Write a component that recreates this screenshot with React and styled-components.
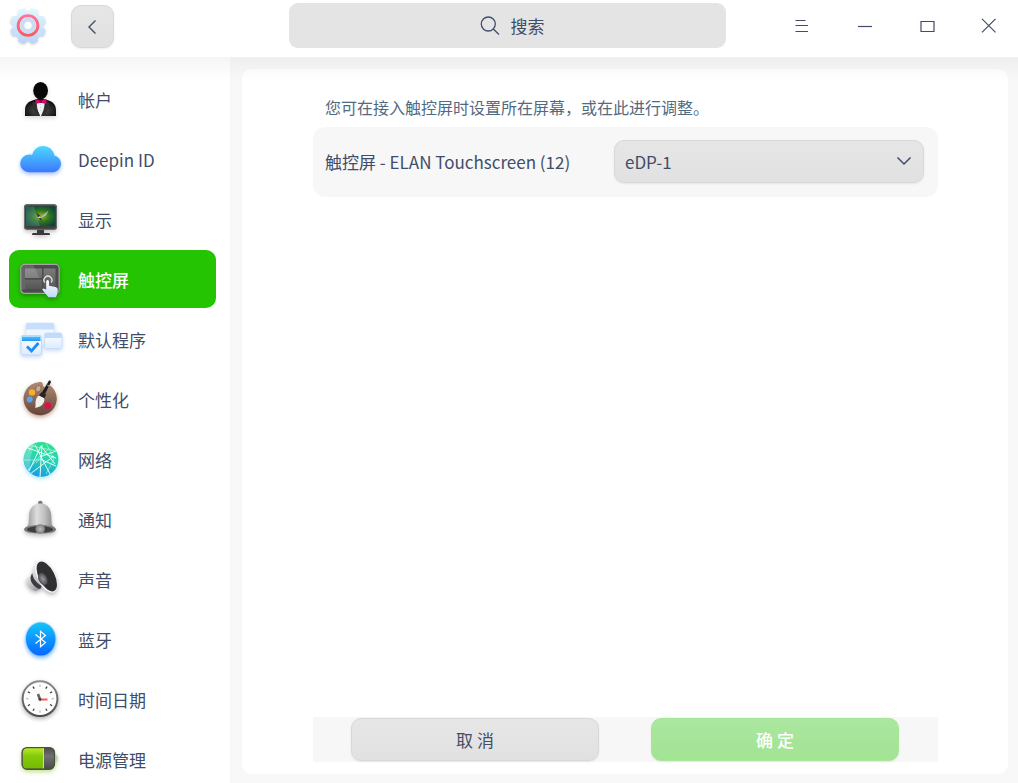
import { useState } from "react";
import styled, { createGlobalStyle } from "styled-components";

const GlobalStyle = createGlobalStyle`
  * {
    box-sizing: border-box;
  }
  body {
    margin: 0;
    background: #ffffff;
    color: #414d68;
    font-family: "Noto Sans CJK SC", "Noto Sans", sans-serif;
    font-size: 17px;
    line-height: 24px;
  }
  button, input, select {
    font: inherit;
    color: inherit;
  }
`;

const AccountIcon = () => (
  <Icon viewBox="0 0 44 44">
    <defs>
      <radialGradient id="suit" cx="50%" cy="70%" r="60%">
        <stop offset="0" stopColor="#5a5a5a" />
        <stop offset="1" stopColor="#0c0c0c" />
      </radialGradient>
    </defs>
    <path d="M7 39V33c0-6 4-9 9-10l6-2 7 2c5 1 9 4 9 10v6z" fill="url(#suit)" />
    <path d="M18.500 25h8.500l-1.500 8-2.500 6h-1L19.500 33z" fill="#f2f2f2" />
    <path d="M22.800 27v9" stroke="#c8c8c8" strokeDasharray="1 2" />
    <path d="M16 24l6 15h-3l-5-10 2-.6-2-1.400zM29.500 24L23.500 39h3l5-10-2-.6 2-1.400z" fill="#303030" />
    <ellipse cx="22.600" cy="13.600" rx="7.400" ry="8.600" fill="#080808" />
    <path d="M17.500 22l5 1.500 6-1.500v5l-6-1.300-5 1.300z" fill="#d5086b" />
    <path d="M21.500 23h2.500v3h-2.500z" fill="#8f0046" />
  </Icon>
);

const CloudIcon = () => (
  <Icon viewBox="0 0 44 44" $shadow="rgba(45, 110, 255, 0.45)">
    <defs>
      <linearGradient id="cloud" x1="0" y1="0" x2="0" y2="1">
        <stop offset="0" stopColor="#4cd9fb" />
        <stop offset="0.500" stopColor="#43a8fd" />
        <stop offset="1" stopColor="#3c78ff" />
      </linearGradient>
    </defs>
    <path
      d="M11 35.200a8.800 8.800 0 0 1 0-17.600c1 0 2 .1 3 .5a11.400 11.400 0 0 1 22.400.5A8.400 8.400 0 0 1 35 35.200z"
      fill="url(#cloud)"
    />
  </Icon>
);

const DisplayIcon = () => (
  <Icon viewBox="0 0 44 44" $shadow="rgba(0, 0, 0, 0.25)">
    <defs>
      <radialGradient id="screen" cx="52%" cy="50%" r="60%">
        <stop offset="0" stopColor="#94b81b" />
        <stop offset="0.500" stopColor="#2f7422" />
        <stop offset="1" stopColor="#0a4339" />
      </radialGradient>
    </defs>
    <path d="M19 32h7v4h5q1 0 1 2H14q0-2 1-2h4z" fill="#3a3a3a" />
    <rect x="6" y="7.300" width="33" height="25.500" rx="3" fill="#3f3f3f" />
    <rect x="6.500" y="7.800" width="32" height="24.500" rx="2.500" fill="none" stroke="#707070" />
    <rect x="8" y="9.500" width="29" height="19.500" rx="1" fill="url(#screen)" />
    <path d="M8 9.500h8l6 19.500H8z" fill="#7eb0b8" opacity="0.280" />
    <path d="M23 19.500l7.500-6-2.500 5-4.500 2.500z" fill="#a3bd9a" />
    <path d="M18 15.500l4.500 3.500 1.500 6-3.500-4.500z" fill="#312b57" />
    <path d="M19 21l3-2 1.500 2z" fill="#d1ec3d" />
  </Icon>
);

const TouchIcon = () => (
  <Icon viewBox="0 0 44 44" $shadow="rgba(0, 0, 0, 0.3)">
    <defs>
      <linearGradient id="pad" x1="0" y1="0" x2="0" y2="1">
        <stop offset="0" stopColor="#7c7c7c" />
        <stop offset="1" stopColor="#565656" />
      </linearGradient>
      <linearGradient id="hand" x1="0" y1="0" x2="0" y2="1">
        <stop offset="0" stopColor="#ffffff" />
        <stop offset="1" stopColor="#bfd9fa" />
      </linearGradient>
    </defs>
    <rect x="2.800" y="7.400" width="38.400" height="29" rx="4" fill="#4c4c4c" stroke="#a5a5a5" strokeWidth="1.200" />
    <path d="M7 11.500h17V21H7zM25.500 11.500H37.500V32H25.500zM7 22.800h17V32H7z" fill="url(#pad)" />
    <path d="M3.500 8.200h12L21.500 21H7V32l-3.500 1z" fill="#ffffff" opacity="0.150" />
    <path d="M26.700 25.500a4 4 0 1 1 6.500 0" fill="none" stroke="#e5e5e5" strokeWidth="1.300" />
    <path
      d="M28.200 24.500q0-1.500 1.400-1.500t1.400 1.500v4.200l6.500 1.200q2.500.5 2.300 3-.2 3.600-1.800 7.300h-7.500l-5.800-7q-1-1.500.5-1.800l3 1.100z"
      fill="url(#hand)"
    />
  </Icon>
);

const DefaultAppsIcon = () => (
  <Icon viewBox="0 0 46 44" $shadow="rgba(70, 140, 220, 0.3)" $wide>
    <defs>
      <linearGradient id="pane" x1="0" y1="0" x2="0" y2="1">
        <stop offset="0" stopColor="#ffffff" />
        <stop offset="1" stopColor="#dcebff" />
      </linearGradient>
      <linearGradient id="bar" x1="0" y1="0" x2="0" y2="1">
        <stop offset="0" stopColor="#4fc0ff" />
        <stop offset="1" stopColor="#2596f5" />
      </linearGradient>
    </defs>
    <rect x="7.800" y="6" width="28.400" height="22" rx="2" fill="url(#pane)" stroke="#d9e8fa" strokeWidth="0.600" />
    <path d="M7.800 12.500V8q0-2 2-2h24.400q2 0 2 2v4.500z" fill="#c5e0ff" />
    <rect x="26.500" y="16" width="17.500" height="15.500" rx="2" fill="url(#pane)" stroke="#c3daf5" strokeWidth="0.800" />
    <path d="M26.500 21v-3q0-2 2-2H42q2 0 2 2v3z" fill="#bfdcff" />
    <rect x="3" y="18.500" width="20.500" height="19.500" rx="2" fill="url(#pane)" stroke="#bcd5f2" strokeWidth="0.900" />
    <path d="M4 24v-4.500h18.500V24z" fill="url(#bar)" />
    <path d="M9 29.500l4.500 4.500 7-8" fill="none" stroke="#1b8ef5" strokeWidth="2.800" />
  </Icon>
);

const PaletteIcon = () => (
  <Icon viewBox="0 0 44 44" $shadow="rgba(130, 50, 20, 0.45)">
    <defs>
      <linearGradient id="wood" x1="0" y1="0" x2="0" y2="1">
        <stop offset="0" stopColor="#ad8b73" />
        <stop offset="1" stopColor="#65453a" />
      </linearGradient>
    </defs>
    <path
      d="M20.500 5.200c3-.3 4.200.2 4.300 2 .1 2.500 2 3.600 4.500 2.300 2-1 3-1 4.500.4A16.600 16.600 0 1 1 20.500 5.200z"
      fill="url(#wood)"
    />
    <ellipse cx="20.200" cy="11.600" rx="2.600" ry="3.300" fill="#c9aa99" stroke="#755548" strokeWidth="0.600" transform="rotate(20 20 12)" />
    <circle cx="14" cy="15.400" r="3.200" fill="#f7ae2c" />
    <circle cx="11.700" cy="22.500" r="3" fill="#58a5f3" />
    <circle cx="29.700" cy="28.600" r="3.300" fill="#e50d4b" />
    <path d="M31 3.500q1.800-.4 2 1.400L27 17l-3-1.500z" fill="#1d1d1d" />
    <path d="M23.800 15l4.400 2.500-2 4-5.400-3z" fill="#242424" />
    <path d="M29.300 8.200l1.700.9" stroke="#c6c6c6" />
    <path d="M20.800 18.500l5.400 2.800c1 5-3.200 9.200-9.200 9.400 1.300-2 0-3.600.6-6.500.5-2.500 1.500-4.500 3.200-5.700z" fill="#f2eee9" />
  </Icon>
);

const NetworkIcon = () => (
  <Icon viewBox="0 0 44 44" $shadow="rgba(20, 185, 235, 0.35)">
    <defs>
      <linearGradient id="globe" x1="0.600" y1="0" x2="0.400" y2="1">
        <stop offset="0" stopColor="#2be38d" />
        <stop offset="0.500" stopColor="#29d2b3" />
        <stop offset="1" stopColor="#159be6" />
      </linearGradient>
      <clipPath id="globeClip">
        <circle cx="23" cy="22.300" r="17.400" />
      </clipPath>
    </defs>
    <circle cx="23" cy="22.300" r="17.400" fill="url(#globe)" />
    <g clipPath="url(#globeClip)" fill="none" stroke="#e3fff6">
      <path d="M23 9L11 34M23 9l14 18M24 8l-2 32M17 8l15 29M22 20L38 14M22 22l16 7M36 19L12 37M10 11l28 10" />
      <path d="M14 9l24 5M6 23h16M28 6l8 16-8 15M31 11L18 26M10 33l12-14M15 6l-4 8" strokeWidth="0.700" opacity="0.700" />
    </g>
    <path d="M6 22A17 17 0 0 1 17 6q-6 14-5 30-6-5-6-14z" fill="#ffffff" opacity="0.250" />
  </Icon>
);

const BellIcon = () => (
  <Icon viewBox="0 0 44 44" $shadow="rgba(0, 0, 0, 0.25)">
    <defs>
      <linearGradient id="bell" x1="0" y1="0" x2="1" y2="0">
        <stop offset="0" stopColor="#858585" />
        <stop offset="0.400" stopColor="#dedede" />
        <stop offset="0.650" stopColor="#bebebe" />
        <stop offset="1" stopColor="#777777" />
      </linearGradient>
      <radialGradient id="clapper">
        <stop offset="0" stopColor="#bdbdbd" />
        <stop offset="1" stopColor="#7d7d7d" />
      </radialGradient>
    </defs>
    <circle cx="22.300" cy="6" r="2.300" fill="#777777" />
    <path d="M22.300 6.500c7.500 0 10.700 5.700 10.900 12l.4 8c.2 3 4.400 4 4.400 6 0 3-7 4.500-15.800 4.500S6 35.500 6 32.500c0-2 4.500-3 4.700-6l.4-8c.2-6.300 3.700-12 11.200-12z" fill="url(#bell)" />
    <ellipse cx="22" cy="32.300" rx="15.500" ry="4.200" fill="#777777" />
    <ellipse cx="22" cy="32.500" rx="13" ry="3.300" fill="#3d3d3d" />
    <circle cx="22.200" cy="32" r="4.800" fill="url(#clapper)" />
  </Icon>
);

const SoundIcon = () => (
  <Icon viewBox="0 0 44 44" $shadow="rgba(0, 0, 0, 0.3)">
    <defs>
      <linearGradient id="cone" x1="0" y1="0" x2="1" y2="1">
        <stop offset="0" stopColor="#f4f4f6" />
        <stop offset="1" stopColor="#85858a" />
      </linearGradient>
      <radialGradient id="core">
        <stop offset="0" stopColor="#9a9a9f" />
        <stop offset="1" stopColor="#4c4c50" />
      </radialGradient>
    </defs>
    <path d="M14 18l-4.500 2.500q-2.500 3.500 0 7.500 3 5 8.500 6l5-2.500z" fill="url(#cone)" />
    <path d="M14 16.500q-3 5 0 9.500 3 5 8 6l2-3-8-12z" fill="#3c3c40" />
    <path d="M19 4.500q-3 4.500-4.500 10-.5 6.500 5 11.500 4 3.500 12.500 8z" fill="url(#cone)" />
    <ellipse cx="28.300" cy="19.600" rx="9" ry="17.500" transform="rotate(-27 28.300 19.600)" fill="#f3f3f5" />
    <ellipse cx="28.800" cy="19.500" rx="7.900" ry="16.200" transform="rotate(-27 28.800 19.500)" fill="#303033" />
    <ellipse cx="24.800" cy="22" rx="4.300" ry="6.500" transform="rotate(-27 24.800 22)" fill="url(#core)" />
  </Icon>
);

const BluetoothIcon = () => (
  <Icon viewBox="0 0 44 44" $shadow="rgba(0, 125, 255, 0.6)">
    <defs>
      <linearGradient id="blue" x1="0" y1="0" x2="0" y2="1">
        <stop offset="0" stopColor="#12c5f9" />
        <stop offset="1" stopColor="#0967ff" />
      </linearGradient>
    </defs>
    <ellipse cx="22.700" cy="22" rx="15.500" ry="17.300" fill="#62c3ff" opacity="0.400" />
    <ellipse cx="22.700" cy="22" rx="14.700" ry="16.500" fill="url(#blue)" />
    <path d="M17.500 17.500l10 8-5 4.200V14.300l5 4.200-10 8" fill="none" stroke="#ffffff" strokeWidth="1.200" />
  </Icon>
);

const ClockIcon = () => (
  <Icon viewBox="0 0 44 44" $shadow="rgba(0, 0, 0, 0.3)">
    <defs>
      <linearGradient id="rim" x1="0" y1="0" x2="0" y2="1">
        <stop offset="0" stopColor="#8c8c8c" />
        <stop offset="1" stopColor="#4c4c4c" />
      </linearGradient>
    </defs>
    <circle cx="22" cy="21.700" r="17.400" fill="#fdfdfd" stroke="url(#rim)" strokeWidth="2" />
    {[0, 30, 60, 90, 120, 150, 180, 210, 240, 270, 300, 330].map((angle) => (
      <path
        key={angle}
        d="M22 7.700v2.400"
        stroke={angle % 90 ? "#333333" : "#bbbbbb"}
        strokeWidth="1.200"
        transform={`rotate(${angle} 22 21.700)`}
      />
    ))}
    <path d="M20 17l2 5.500" stroke="#646464" strokeWidth="2.600" />
    <path d="M22 22.500h7.500" stroke="#ff5955" strokeWidth="2" />
    <circle cx="22" cy="22.500" r="1.400" fill="#444444" />
  </Icon>
);

const BatteryIcon = () => (
  <Icon viewBox="0 0 44 44" $shadow="rgba(120, 190, 0, 0.45)">
    <defs>
      <linearGradient id="charge" x1="0" y1="0" x2="0" y2="1">
        <stop offset="0" stopColor="#b8ea24" />
        <stop offset="0.400" stopColor="#83c90c" />
        <stop offset="1" stopColor="#75bb00" />
      </linearGradient>
      <linearGradient id="shell" x1="0" y1="0" x2="0" y2="1">
        <stop offset="0" stopColor="#4a4a4a" />
        <stop offset="0.400" stopColor="#707070" />
        <stop offset="1" stopColor="#494949" />
      </linearGradient>
    </defs>
    <path d="M36 16.500q4 1 4 4.800T36 26z" fill="#cccccc" />
    <rect x="4" y="10.500" width="32.500" height="21.800" rx="5" fill="url(#shell)" />
    <path d="M25.500 11.200H8.500Q4.800 11.200 4.800 15v13q0 3.600 3.700 3.600h17z" fill="url(#charge)" />
    <path d="M25.500 11v20.500" stroke="#c5f04c" />
    <rect x="4" y="10.500" width="32.500" height="21.800" rx="5" fill="none" stroke="#4a5139" strokeWidth="1.200" />
  </Icon>
);

const Logo = () => (
  <LogoSvg viewBox="0 0 40 40" aria-hidden="true">
    <defs>
      <linearGradient id="gear" x1="0" y1="0" x2="0" y2="1">
        <stop offset="0" stopColor="#e4fbff" />
        <stop offset="1" stopColor="#b7d1fa" />
      </linearGradient>
      <linearGradient id="ring" x1="0" y1="0" x2="0" y2="1">
        <stop offset="0" stopColor="#ff7299" />
        <stop offset="1" stopColor="#fa5b60" />
      </linearGradient>
      <mask id="teeth">
        <circle cx="20" cy="20" r="15" fill="#ffffff" />
        {[22.5, 67.5, 112.5, 157.5, 202.5, 247.5, 292.5, 337.5].map((angle) => (
          <path
            key={angle}
            d="M14.500 9l1.600-5.500q.5-1.600 2-1.600h3.800q1.500 0 2 1.600L25.500 9z"
            fill="#ffffff"
            transform={`rotate(${angle} 20 20)`}
          />
        ))}
      </mask>
    </defs>
    <rect width="40" height="40" fill="url(#gear)" mask="url(#teeth)" />
    <circle cx="20" cy="19.500" r="6" fill="none" stroke="#cfdbee" strokeWidth="3.500" />
    <circle cx="20" cy="19.500" r="3.500" fill="#ffffff" />
    <circle cx="20" cy="19.500" r="9.900" fill="none" stroke="url(#ring)" strokeWidth="2.800" />
  </LogoSvg>
);

const menu = [
  { id: "accounts", name: "帐户", icon: AccountIcon },
  { id: "deepinid", name: "Deepin ID", icon: CloudIcon },
  { id: "display", name: "显示", icon: DisplayIcon },
  { id: "touchscreen", name: "触控屏", icon: TouchIcon },
  { id: "defaultapp", name: "默认程序", icon: DefaultAppsIcon },
  { id: "personalization", name: "个性化", icon: PaletteIcon },
  { id: "network", name: "网络", icon: NetworkIcon },
  { id: "notification", name: "通知", icon: BellIcon },
  { id: "sound", name: "声音", icon: SoundIcon },
  { id: "bluetooth", name: "蓝牙", icon: BluetoothIcon },
  { id: "datetime", name: "时间日期", icon: ClockIcon },
  { id: "power", name: "电源管理", icon: BatteryIcon },
];

function App() {
  const [active, setActive] = useState("touchscreen");
  const [search, setSearch] = useState("");
  const [screen, setScreen] = useState("eDP-1");

  return (
    <Window>
      <GlobalStyle />
      <Header>
        <Brand>
          <Logo />
        </Brand>
        <BackButton aria-label="返回">
          <Line width="16" height="16" viewBox="0 0 16 16">
            <path d="M10.500 1.500L4 8l6.500 6.500" strokeWidth="1.400" />
          </Line>
        </BackButton>
        <SearchBox>
          <SearchIcon width="20" height="20" viewBox="0 0 20 20">
            <circle cx="8.300" cy="8" r="7" />
            <path d="M13.300 13l5.700 5.500" />
          </SearchIcon>
          <SearchInput
            aria-label="搜索"
            placeholder="搜索"
            value={search}
            onChange={(e) => setSearch(e.target.value)}
          />
        </SearchBox>
        <Controls>
          <ControlButton aria-label="菜单">
            <Line width="16" height="16" viewBox="0 0 16 16">
              <path d="M1.500 2.500h10M1.500 7.500H14M1.500 13.500H14" strokeWidth="1.200" />
            </Line>
          </ControlButton>
          <ControlButton aria-label="最小化">
            <Line width="16" height="16" viewBox="0 0 16 16">
              <path d="M1 8.500h14" strokeWidth="1.200" />
            </Line>
          </ControlButton>
          <ControlButton aria-label="最大化">
            <Line width="16" height="16" viewBox="0 0 16 16">
              <path d="M1 3.500h13v10H1z" strokeWidth="1.200" />
            </Line>
          </ControlButton>
          <ControlButton aria-label="关闭">
            <Line width="20" height="16" viewBox="0 0 20 16">
              <path d="M1 .8l13.500 13.500M14.500.8L1 14.300" strokeWidth="1.200" />
            </Line>
          </ControlButton>
        </Controls>
      </Header>

      <Body>
        <Sidebar>
          {menu.map(({ id, name, icon: ItemIcon }) => (
            <MenuItem
              key={id}
              href={`#${id}`}
              $active={active === id}
              onClick={() => setActive(id)}
            >
              <ItemIcon />
              <MenuName>{name}</MenuName>
            </MenuItem>
          ))}
        </Sidebar>

        <Main>
          <Card>
            <Hint>您可在接入触控屏时设置所在屏幕，或在此进行调整。</Hint>
            <SettingRow>
              <label htmlFor="screen">触控屏 - ELAN Touchscreen (12)</label>
              <SelectWrap>
                <Select
                  id="screen"
                  value={screen}
                  onChange={(e) => setScreen(e.target.value)}
                >
                  <option>eDP-1</option>
                </Select>
                <Chevron width="16" height="16" viewBox="0 0 16 16">
                  <path d="M1.500 4.500L8 11l6.500-6.500" strokeWidth="1.500" />
                </Chevron>
              </SelectWrap>
            </SettingRow>
            <Footer>
              <Button>取 消</Button>
              <Button $primary disabled>
                确 定
              </Button>
            </Footer>
          </Card>
        </Main>
      </Body>
    </Window>
  );
}

export default App;

const Window = styled.div`
  display: flex;
  flex-direction: column;
  height: 100vh;
  overflow: hidden;
`;

const Header = styled.header`
  position: relative;
  display: flex;
  align-items: flex-end;
  padding: 3px 0 9px 8px;
  background: #ffffff;
  &::after {
    content: "";
    position: absolute;
    z-index: 1;
    top: 100%;
    left: 0;
    right: 0;
    height: 24px;
    background: linear-gradient(rgba(0, 0, 0, 0.04), rgba(0, 0, 0, 0));
    pointer-events: none;
  }
`;

const Brand = styled.div`
  display: flex;
  align-items: center;
  height: 45px;
  margin-right: 23px;
`;

const LogoSvg = styled.svg`
  width: 40px;
  height: 40px;
  filter: drop-shadow(0 1px 1px rgba(0, 0, 0, 0.2));
`;

const Line = styled.svg`
  fill: none;
  stroke: #414d68;
`;

const raised = `
  border: 1px solid #d8d8d8;
  border-radius: 10px;
  background: linear-gradient(#e6e6e6, #e1e1e1);
  box-shadow: 0 1px 2px rgba(0, 0, 0, 0.08);
`;

const BackButton = styled.button`
  display: flex;
  align-items: center;
  justify-content: center;
  width: 43px;
  height: 43px;
  padding: 0;
  ${raised}
`;

const SearchBox = styled.div`
  position: relative;
  flex: 1;
  margin: 0 49px 0 175px;
`;

const SearchIcon = styled(Line)`
  position: absolute;
  top: 13px;
  left: calc(50% - 28px);
  stroke-width: 1.3;
  pointer-events: none;
`;

const SearchInput = styled.input`
  display: block;
  width: 100%;
  height: 45px;
  padding: 0 0 1px 40px;
  border: none;
  border-radius: 9px;
  outline: none;
  background: #e4e4e4;
  text-align: center;
  &::placeholder {
    color: #414d68;
    opacity: 1;
  }
`;

const Controls = styled.div`
  display: flex;
  gap: 9px;
`;

const ControlButton = styled.button`
  display: flex;
  align-items: center;
  justify-content: center;
  width: 54px;
  height: 45px;
  padding: 0;
  border: none;
  background: none;
`;

const Body = styled.div`
  display: flex;
  flex: 1;
  min-height: 0;
`;

const Sidebar = styled.nav`
  display: flex;
  flex-direction: column;
  flex: none;
  gap: 2px;
  width: 230px;
  padding: 13px 14px 13px 9px;
  overflow-y: auto;
  scrollbar-width: none;
`;

const MenuItem = styled.a`
  display: flex;
  flex: none;
  align-items: center;
  gap: 16px;
  height: 58px;
  padding: 0 9px;
  border-radius: 10px;
  background: ${(props) => (props.$active ? "#24c402" : "none")};
  color: ${(props) => (props.$active ? "#ffffff" : "#414d68")};
  font-weight: ${(props) => (props.$active ? 500 : 400)};
  text-decoration: none;
`;

const MenuName = styled.span`
  padding-top: 2px;
`;

const Icon = styled.svg`
  flex: none;
  width: ${(props) => (props.$wide ? "46px" : "44px")};
  height: 44px;
  margin-right: ${(props) => (props.$wide ? "-2px" : "0")};
  overflow: visible;
  filter: drop-shadow(0 2px 2px ${(props) => props.$shadow || "rgba(0, 0, 0, 0.15)"});
`;

const Main = styled.main`
  display: flex;
  flex: 1;
  min-width: 0;
  padding: 12px 10px 9px 12px;
  background: #f8f8f8;
`;

const Card = styled.section`
  display: flex;
  flex: 1;
  flex-direction: column;
  min-width: 0;
  padding: 26px 70px 12px 71px;
  border-radius: 10px;
  background: #ffffff;
`;

const Hint = styled.p`
  margin: 0 0 8px;
  padding-left: 12px;
  color: #526a7f;
  font-size: 16px;
`;

const SettingRow = styled.div`
  display: grid;
  grid-template-columns: 277fr 310fr;
  gap: 12px;
  align-items: center;
  height: 70px;
  padding: 0 14px 1px 12px;
  border-radius: 12px;
  background: #f7f7f7;
`;

const SelectWrap = styled.div`
  position: relative;
`;

const Select = styled.select`
  display: block;
  width: 100%;
  height: 43px;
  padding: 0 36px 0 10px;
  appearance: none;
  ${raised}
`;

const Chevron = styled(Line)`
  position: absolute;
  top: 13px;
  right: 12px;
  pointer-events: none;
`;

const Footer = styled.footer`
  display: flex;
  gap: 52px;
  margin-top: auto;
  padding: 1px 39px 1px 38px;
  background: #f7f7f7;
`;

const Button = styled.button`
  flex: 1;
  height: 43px;
  padding: 0;
  ${raised}
  ${(props) =>
    props.$primary &&
    `
    border-color: #a6e69a;
    background: linear-gradient(#abe79f, #a2e394);
    color: #ffffff;
    font-weight: 500;
  `}
`;
